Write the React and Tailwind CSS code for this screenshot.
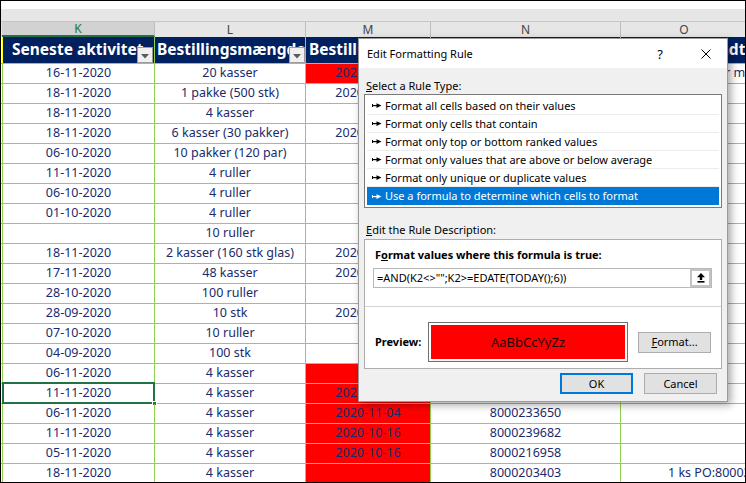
import React from "react";

const rows = [
  { k: "16-11-2020", l: "20 kasser", m: "2020-10-28", red: true, o: "Afventer modtagelse", oPad: "pl-[59px]" },
  { k: "18-11-2020", l: "1 pakke (500 stk)", m: "2020-11-02" },
  { k: "18-11-2020", l: "4 kasser", m: "" },
  { k: "18-11-2020", l: "6 kasser (30 pakker)", m: "2020-11-10" },
  { k: "06-10-2020", l: "10 pakker (120 par)", m: "" },
  { k: "11-11-2020", l: "4 ruller", m: "" },
  { k: "06-10-2020", l: "4 ruller", m: "" },
  { k: "01-10-2020", l: "4 ruller", m: "" },
  { k: "", l: "10 ruller", m: "" },
  { k: "18-11-2020", l: "2 kasser (160 stk glas)", m: "2020-11-12" },
  { k: "17-11-2020", l: "48 kasser", m: "2020-11-09" },
  { k: "28-10-2020", l: "100 ruller", m: "" },
  { k: "28-09-2020", l: "10 stk", m: "2020-09-21" },
  { k: "07-10-2020", l: "10 ruller", m: "" },
  { k: "04-09-2020", l: "100 stk", m: "" },
  { k: "06-11-2020", l: "4 kasser", m: "", red: true },
  { k: "11-11-2020", l: "4 kasser", m: "2020-10-30", red: true, selected: true },
  { k: "06-11-2020", l: "4 kasser", m: "2020-11-04", red: true, n: "8000233650" },
  { k: "11-11-2020", l: "4 kasser", m: "2020-10-16", red: true, n: "8000239682" },
  { k: "05-11-2020", l: "4 kasser", m: "2020-10-16", red: true, n: "8000216958" },
  { k: "18-11-2020", l: "4 kasser", m: "", red: true, n: "8000203403", o: "1 ks PO:8000203403", oPad: "pl-[47px]" },
];

const ruleTypes = [
  "Format all cells based on their values",
  "Format only cells that contain",
  "Format only top or bottom ranked values",
  "Format only values that are above or below average",
  "Format only unique or duplicate values",
  "Use a formula to determine which cells to format",
];

const FilterButton = ({ className }) => (
  <div
    className={`absolute bottom-0 w-[16px] h-[16px] bg-[#f0f0f0] border border-[#9b9b9b] flex items-center justify-center ${className}`}
  >
    <svg width="8" height="5" viewBox="0 0 8 5" className="mt-[2px]">
      <polygon points="0,0 8,0 4,4.5" fill="#5a5a5a" />
    </svg>
  </div>
);

const RuleArrow = ({ color }) => (
  <svg width="10" height="7" viewBox="0 0 10 7" className="shrink-0">
    <rect x="0" y="3" width="5" height="1.2" fill={color} />
    <rect x="0" y="2" width="1" height="3" fill={color} />
    <polygon points="4.5,1.2 9.5,3.6 4.5,6" fill={color} />
  </svg>
);

export default function App() {
  return (
    <div className="relative w-[746px] h-[483px] overflow-hidden border border-black bg-white font-['Noto_Sans',sans-serif]">
      <div className="h-[8px] bg-white" />
      <div className="h-[12px] bg-[#e6e6e6]" />

      {/* column letters */}
      <div className="flex h-[16px] border-t border-[#c6c6c6] bg-[#e6e6e6] text-[12px] leading-none text-[#444]">
        <div className="w-[1px]" />
        <div className="w-[153px] bg-[#d2d2d2] border-b-2 border-[#217346] border-r border-r-[#bdbdbd] text-[#217346] flex items-center justify-center">
          K
        </div>
        <div className="w-[151px] border-r border-[#bdbdbd] flex items-center justify-center">L</div>
        <div className="w-[125px] border-r border-[#bdbdbd] flex items-center justify-center">M</div>
        <div className="w-[190px] border-r border-[#bdbdbd] flex items-center justify-center">N</div>
        <div className="flex-1 flex items-center justify-center pl-[2px]">O</div>
      </div>

      {/* table header */}
      <div className="flex h-[27px] bg-[#002060] border-b border-[#92d050] text-white font-bold text-[15.5px] whitespace-nowrap">
        <div className="w-[1px] bg-white" />
        <div className="relative w-[153px] border-l border-l-[#ffff00] border-r border-[#92d050] overflow-hidden flex items-center pl-[9px]">
          Seneste aktivitet
          <FilterButton className="right-[1px]" />
        </div>
        <div className="relative w-[151px] border-r border-[#92d050] overflow-hidden flex items-center pl-[2px]">
          Bestillingsmængde
          <FilterButton className="right-0" />
        </div>
        <div className="w-[125px] border-r border-[#92d050] overflow-hidden flex items-center pl-[3px]">
          Bestillingsdato
        </div>
        <div className="w-[190px] border-r border-[#92d050] overflow-hidden flex items-center pl-[3px]">
          Ordrenummer
        </div>
        <div className="flex-1 overflow-hidden flex items-center pl-[80px]">Sendt af</div>
      </div>

      {/* data rows */}
      {rows.map((r, i) => (
        <div
          key={i}
          className="flex h-[20px] border-b border-[#92d050] text-[12.5px] leading-none text-[#1a2b6d] whitespace-nowrap"
        >
          <div className="w-[1px] bg-white" />
          <div className="relative w-[153px] border-l border-r border-[#92d050] flex items-center justify-center">
            {r.k}
            {r.selected && (
              <>
                <div className="absolute left-[-1px] top-[-2px] right-[-1px] bottom-[-1px] border-2 border-[#217346]" />
                <div className="absolute right-[-3px] bottom-[-3px] w-[5px] h-[5px] bg-[#217346] border border-white" />
              </>
            )}
          </div>
          <div className="w-[151px] border-r border-[#92d050] flex items-center justify-center">{r.l}</div>
          <div
            className={`w-[125px] border-r border-[#92d050] flex items-center justify-center ${
              r.red ? "bg-[#ff0000]" : "bg-white"
            }`}
          >
            {r.m}
          </div>
          <div className="w-[190px] border-r border-[#92d050] flex items-center justify-center">{r.n}</div>
          <div className={`flex-1 overflow-hidden flex items-center ${r.oPad || ""}`}>{r.o}</div>
        </div>
      ))}

      {/* Edit Formatting Rule dialog */}
      <div className="absolute left-[357px] top-[37px] w-[370px] h-[364px] bg-[#f0f0f0] border border-[#9a9a9a] shadow-[3px_3px_8px_rgba(0,0,0,0.35)] flex flex-col text-[11px] leading-[12px] text-black">
        <div className="h-[29px] bg-white flex items-center pl-[8px] shrink-0">
          <span className="flex-1 text-[11px]">Edit Formatting Rule</span>
          <span className="text-[13px] mr-[38px]">?</span>
          <svg width="10" height="10" viewBox="0 0 10 10" className="mr-[16px]">
            <path d="M0.5 0.5 L9.5 9.5 M9.5 0.5 L0.5 9.5" stroke="#000" strokeWidth="1" />
          </svg>
        </div>

        <div className="mt-[12px] ml-[7px] h-[12px]">
          <span className="underline">S</span>elect a Rule Type:
        </div>
        <div className="mt-[2px] ml-[5px] w-[358px] border border-[#7a7a7a] bg-white p-[2px]">
          {ruleTypes.map((t, i) => {
            const sel = i === ruleTypes.length - 1;
            return (
              <div
                key={t}
                className={`h-[18px] flex items-center gap-[3px] pl-[5px] ${
                  sel ? "bg-[#0078d7] text-white" : "border-b border-[#ececec]"
                }`}
              >
                <RuleArrow color={sel ? "#ffffff" : "#000000"} />
                <span>{t}</span>
              </div>
            );
          })}
        </div>

        <div className="mt-[16px] ml-[7px] h-[12px]">
          <span className="underline">E</span>dit the Rule Description:
        </div>
        <div className="mt-[3px] ml-[5px] w-[358px] h-[130px] border border-[#adadad] bg-white flex flex-col">
          <div className="mt-[9px] pl-[10px] h-[12px] font-bold">
            F<span className="underline">o</span>rmat values where this formula is true:
          </div>
          <div className="mt-[7px] ml-[8px] w-[339px] h-[20px] border border-[#b9b9b9] flex items-center">
            <span className="flex-1 pl-[3px]">=AND(K2&lt;&gt;"";K2&gt;=EDATE(TODAY();6))</span>
            <div className="w-[21px] h-[18px] border-2 border-[#c4c4c4] bg-white flex items-center justify-center">
              <svg width="8" height="10" viewBox="0 0 8 10">
                <polygon points="4,0 8,4.2 0,4.2" fill="#000" />
                <rect x="2.8" y="4" width="2.4" height="3" fill="#000" />
                <rect x="0.5" y="8" width="7" height="1.6" fill="#000" />
              </svg>
            </div>
          </div>
          <div className="mt-[18px] h-[1px] bg-[#d4d4d4]" />
          <div className="mt-[15px] flex items-center">
            <div className="w-[63px] pl-[10px] font-bold">Preview:</div>
            <div className="w-[200px] h-[40px] border border-[#6e6e6e] p-[2px]">
              <div className="w-full h-full bg-[#ff0000] flex items-center justify-center text-[13px] text-[#1a0606]">
                AaBbCcYyZz
              </div>
            </div>
            <div className="ml-[10px] w-[73px] h-[21px] bg-[#e1e1e1] border border-[#adadad] flex items-center justify-center">
              <span>
                <span className="underline">F</span>ormat...
              </span>
            </div>
          </div>
        </div>

        <div className="mt-[4px] flex justify-end gap-[11px] pr-[10px]">
          <div className="w-[73px] h-[21px] bg-[#e1e1e1] border-2 border-[#0078d7] flex items-center justify-center">
            OK
          </div>
          <div className="w-[73px] h-[21px] bg-[#e1e1e1] border border-[#adadad] flex items-center justify-center">
            Cancel
          </div>
        </div>
      </div>
    </div>
  );
}
